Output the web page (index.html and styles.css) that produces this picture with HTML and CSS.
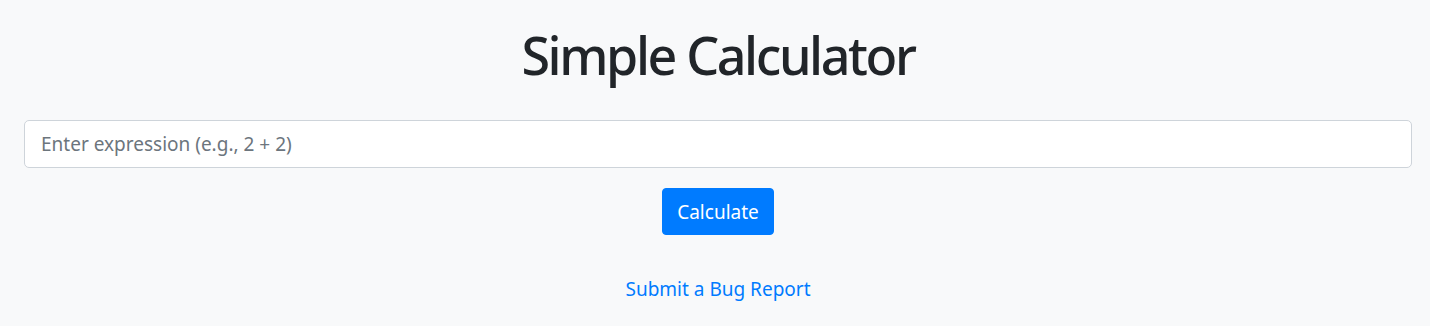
FILE: index.html
```html
<!DOCTYPE html>
<html lang="en">
<head>
<meta charset="utf-8">
<title>Simple Calculator</title>
<link rel="stylesheet" href="styles.css">
</head>
<body>
<main class="container">
  <h1 class="title">Simple Calculator</h1>
  <input class="expr" type="text" placeholder="Enter expression (e.g., 2 + 2)">
  <div class="actions">
    <button class="btn" type="button">Calculate</button>
  </div>
  <div class="result"></div>
  <div class="footer">
    <a class="bug-link" href="#">Submit a Bug Report</a>
  </div>
</main>
</body>
</html>
```
FILE: styles.css
```css
html, body {
  margin: 0;
  padding: 0;
  background: #f8f9fa;
  color: #212529;
  font-family: "Noto Sans", "Open Sans", sans-serif;
}
.container {
  padding: 19px 18px 0 24px;
  display: flex;
  flex-direction: column;
}
.title {
  margin: 0 0 29px;
  text-align: center;
  font-size: 52px;
  font-weight: 500;
  letter-spacing: -2.4px;
  line-height: 72px;
}
.expr {
  box-sizing: border-box;
  width: 100%;
  height: 48px;
  padding: 8px 16px;
  border: 1px solid #ced4da;
  border-radius: 5px;
  background: #fff;
  font-family: inherit;
  font-size: 19px;
  color: #495057;
}
.expr::placeholder {
  color: #6c757d;
}
.actions {
  display: flex;
  justify-content: center;
  margin-top: 20px;
}
.btn {
  box-sizing: border-box;
  height: 47px;
  padding: 0 14px;
  border: 1px solid #007bff;
  border-radius: 4px;
  background: #007bff;
  color: #fff;
  font-family: inherit;
  font-size: 19px;
}
.footer {
  display: flex;
  justify-content: center;
  margin-top: 40px;
}
.bug-link {
  color: #007bff;
  text-decoration: none;
  font-size: 19px;
  line-height: 28px;
}
```
